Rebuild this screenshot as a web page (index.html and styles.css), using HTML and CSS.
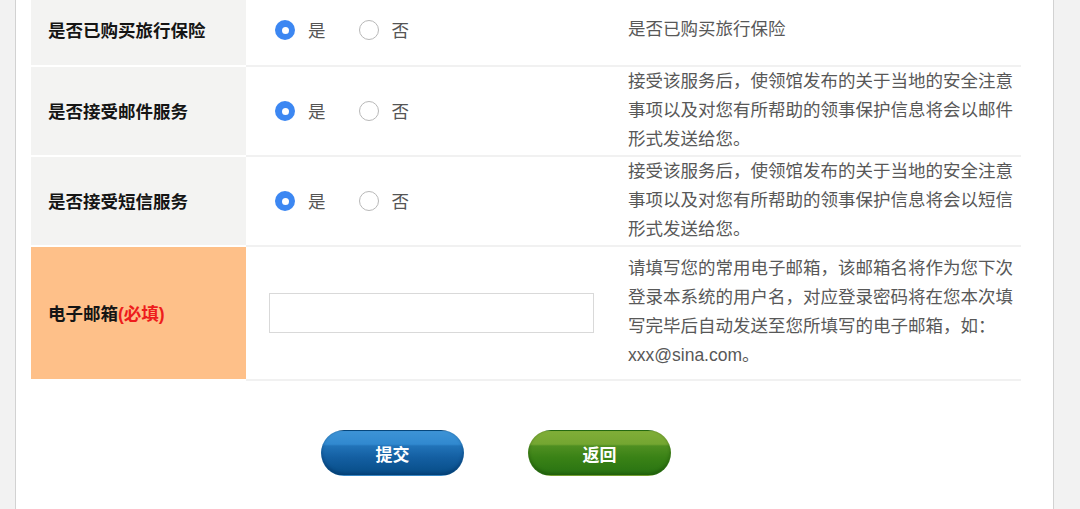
FILE: index.html
```html
<!DOCTYPE html>
<html lang="zh-CN">
<head>
<meta charset="utf-8">
<title>表单</title>
<link rel="stylesheet" href="styles.css">
</head>
<body>
<div class="page">
  <div class="form">
    <div class="row row-short">
      <div class="label">是否已购买旅行保险</div>
      <div class="opts">
        <span class="opt"><span class="radio checked"></span>是</span>
        <span class="opt"><span class="radio"></span>否</span>
      </div>
      <div class="desc">是否已购买旅行保险</div>
    </div>
    <div class="row row-mid">
      <div class="label">是否接受邮件服务</div>
      <div class="opts">
        <span class="opt"><span class="radio checked"></span>是</span>
        <span class="opt"><span class="radio"></span>否</span>
      </div>
      <div class="desc">接受该服务后，使领馆发布的关于当地的安全注意<br>事项以及对您有所帮助的领事保护信息将会以邮件<br>形式发送给您。</div>
    </div>
    <div class="row row-mid">
      <div class="label">是否接受短信服务</div>
      <div class="opts">
        <span class="opt"><span class="radio checked"></span>是</span>
        <span class="opt"><span class="radio"></span>否</span>
      </div>
      <div class="desc">接受该服务后，使领馆发布的关于当地的安全注意<br>事项以及对您有所帮助的领事保护信息将会以短信<br>形式发送给您。</div>
    </div>
    <div class="row row-tall">
      <div class="label label-req">电子邮箱<span class="req">(必填)</span></div>
      <div class="opts opts-input">
        <input class="text-input" type="text">
      </div>
      <div class="desc">请填写您的常用电子邮箱，该邮箱名将作为您下次<br>登录本系统的用户名，对应登录密码将在您本次填<br>写完毕后自动发送至您所填写的电子邮箱，如：<br>xxx@sina.com。</div>
    </div>
  </div>
  <div class="actions">
    <button class="btn btn-blue" type="button">提交</button>
    <button class="btn btn-green" type="button">返回</button>
  </div>
</div>
</body>
</html>
```

FILE: styles.css
```css
html, body {
  margin: 0;
  padding: 0;
}
body {
  background: #f2f2f2;
  font-family: "Liberation Sans", "Noto Sans CJK SC", sans-serif;
  height: 509px;
  overflow: hidden;
}
.page {
  margin-left: 15px;
  width: 1039px;
  height: 520px;
  background: #fff;
  border-left: 1px solid #d2d2d2;
  border-right: 1px solid #d2d2d2;
  padding-left: 15px;
  box-sizing: border-box;
}
.form {
  width: 990px;
  margin-top: -5px;
}
.row {
  display: flex;
}
.row-short { height: 72px; }
.row-mid { height: 90px; }
.row-tall { height: 134px; }

.label {
  width: 215px;
  flex: none;
  box-sizing: border-box;
  padding-left: 17px;
  padding-bottom: 2px;
  display: flex;
  align-items: center;
  background: #f3f3f2;
  border-bottom: 2px solid #fff;
  font-size: 17.5px;
  font-weight: bold;
  color: #151515;
}
.label-req {
  background: #fec089;
}
.req {
  color: #ee1c1c;
}
.opts {
  width: 366px;
  flex: none;
  box-sizing: border-box;
  padding-left: 29px;
  padding-bottom: 2px;
  display: flex;
  align-items: center;
  border-bottom: 2px solid #f1f1f1;
  font-size: 17.5px;
  color: #555;
}
.opts-input {
  padding-left: 23px;
  padding-bottom: 0;
}
.opt {
  display: inline-flex;
  align-items: center;
  margin-right: 33px;
}
.radio {
  width: 20px;
  height: 20px;
  box-sizing: border-box;
  border-radius: 50%;
  border: 1px solid #b8b8b8;
  background: #fff;
  margin-right: 13px;
  position: relative;
  top: 1px;
}
.radio.checked {
  border: none;
  background: #3c87f2;
}
.radio.checked::after {
  content: "";
  position: absolute;
  left: 6.5px;
  top: 6.5px;
  width: 7px;
  height: 7px;
  border-radius: 50%;
  background: #fff;
}
.text-input {
  width: 325px;
  height: 40px;
  box-sizing: border-box;
  border: 1px solid #d9d9d9;
  background: #fff;
  margin: 0;
  padding: 0 8px;
  outline: none;
}
.desc {
  flex: 1;
  box-sizing: border-box;
  padding-left: 16px;
  padding-bottom: 2px;
  display: flex;
  align-items: center;
  border-bottom: 2px solid #f1f1f1;
  font-size: 17.5px;
  line-height: 29px;
  color: #585858;
  white-space: nowrap;
}
.actions {
  display: flex;
  gap: 64px;
  padding-left: 290px;
  margin-top: 49px;
}
.btn {
  width: 143px;
  height: 46px;
  border-radius: 23px;
  border: 1px solid rgba(0, 0, 0, 0.08);
  color: #fff;
  font-family: "Noto Sans CJK SC", sans-serif;
  font-size: 17px;
  font-weight: bold;
  cursor: pointer;
  padding: 0;
}
.btn-blue {
  background: linear-gradient(to bottom, #3d93d6 0%, #3189cf 30%, #2173b8 34%, #145fa2 60%, #064c86 100%);
  box-shadow: inset 0 -2px 3px rgba(0, 40, 90, 0.35);
}
.btn-green {
  background: linear-gradient(to bottom, #80ae38 0%, #74a631 30%, #4f8f21 34%, #3a8216 60%, #287212 100%);
  box-shadow: inset 0 -2px 3px rgba(20, 60, 0, 0.35);
}
```
